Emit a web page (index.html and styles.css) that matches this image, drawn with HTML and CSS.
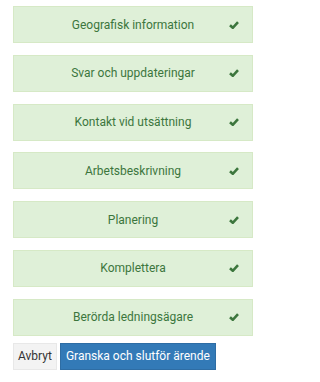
FILE: index.html
```html
<!DOCTYPE html>
<html>
<head>
<meta charset="utf-8">
<link rel="stylesheet" href="styles.css">
</head>
<body>
<div class="page">
  <div class="steps">
    <div class="step"><span class="label">Geografisk information</span><svg class="check" viewBox="0 0 10 8"><path d="M1 4.2 L3.8 6.8 L9 1.2" /></svg></div>
    <div class="step"><span class="label">Svar och uppdateringar</span><svg class="check" viewBox="0 0 10 8"><path d="M1 4.2 L3.8 6.8 L9 1.2" /></svg></div>
    <div class="step"><span class="label">Kontakt vid utsättning</span><svg class="check" viewBox="0 0 10 8"><path d="M1 4.2 L3.8 6.8 L9 1.2" /></svg></div>
    <div class="step"><span class="label">Arbetsbeskrivning</span><svg class="check" viewBox="0 0 10 8"><path d="M1 4.2 L3.8 6.8 L9 1.2" /></svg></div>
    <div class="step"><span class="label">Planering</span><svg class="check" viewBox="0 0 10 8"><path d="M1 4.2 L3.8 6.8 L9 1.2" /></svg></div>
    <div class="step"><span class="label">Komplettera</span><svg class="check" viewBox="0 0 10 8"><path d="M1 4.2 L3.8 6.8 L9 1.2" /></svg></div>
    <div class="step"><span class="label">Berörda ledningsägare</span><svg class="check" viewBox="0 0 10 8"><path d="M1 4.2 L3.8 6.8 L9 1.2" /></svg></div>
  </div>
  <div class="actions">
    <button class="btn btn-default">Avbryt</button>
    <button class="btn btn-primary">Granska och slutför ärende</button>
  </div>
</div>
</body>
</html>
```

FILE: styles.css
```css
html, body {
  margin: 0;
  padding: 0;
  background: #ffffff;
}
body {
  font-family: Roboto, "Liberation Sans", sans-serif;
  font-size: 12px;
}
.page {
  width: 240px;
  padding: 6px 0 0 13px;
}
.steps {
  display: flex;
  flex-direction: column;
  gap: 11.75px;
}
.step {
  position: relative;
  height: 37px;
  background: #dff0d8;
  border: 1px solid #d6e9c6;
  box-sizing: border-box;
  display: flex;
  align-items: center;
  justify-content: center;
  color: #3c763d;
}
.label {
  line-height: 1;
}
.check {
  position: absolute;
  right: 13px;
  top: 50%;
  width: 10px;
  height: 8px;
  margin-top: -4px;
}
.check path {
  fill: none;
  stroke: #3c763d;
  stroke-width: 2.6;
  stroke-linecap: butt;
  stroke-linejoin: miter;
}
.actions {
  display: flex;
  gap: 3px;
  margin-top: 7.5px;
}
.btn {
  font-family: Roboto, "Liberation Sans", sans-serif;
  font-size: 12px;
  height: 27px;
  padding: 0 4px;
  border: 1px solid transparent;
  border-radius: 0;
  margin: 0;
  line-height: 25px;
}
.btn-default {
  background: #f3f3f3;
  border-color: #e8e8e8;
  color: #333333;
  padding: 0 4px;
}
.btn-primary {
  background: #337ab7;
  border-color: #2e6da4;
  color: #ffffff;
  padding: 0 5px;
}
```
